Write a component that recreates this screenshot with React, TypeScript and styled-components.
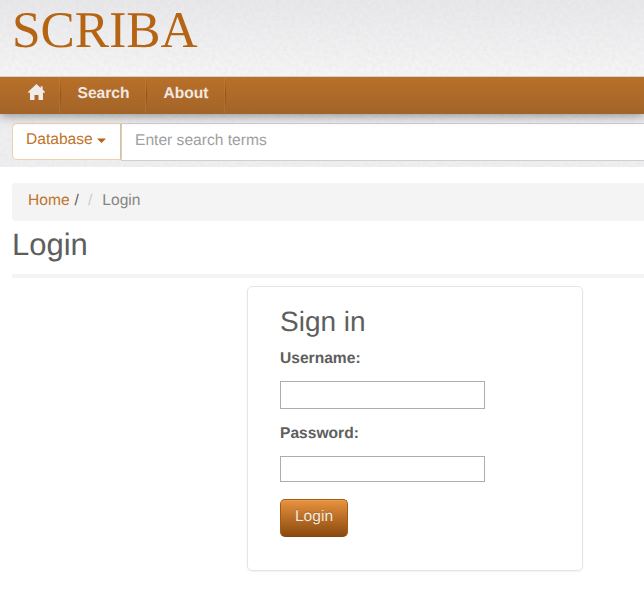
import React from "react";
import styled, { createGlobalStyle } from "styled-components";

const grain = encodeURIComponent(
  `<svg xmlns="http://www.w3.org/2000/svg" width="200" height="200"><filter id="n" x="0" y="0" width="100%" height="100%" color-interpolation-filters="sRGB"><feTurbulence type="fractalNoise" baseFrequency="0.25" numOctaves="2" stitchTiles="stitch"/><feColorMatrix values="0 0 0 0 0.5  0 0 0 0 0.5  0 0 0 0 0.53  0.1 0 0 0 -0.035"/></filter><rect width="200" height="200" filter="url(#n)"/></svg>`
);

const GlobalStyle = createGlobalStyle`
  *, *::before, *::after { box-sizing: border-box; }
  body {
    margin: 0;
    overflow: hidden;
    background: #fff;
    color: #5e5e5e;
    font: 15.6px/20px "Liberation Sans", Arial, sans-serif;
    text-rendering: geometricPrecision;
  }
`;

const Page = styled.div`
  height: 611px;
  overflow: hidden;
`;

const Header = styled.header`
  position: relative;
  z-index: 2;
  height: 77px;
  padding: 1px 12px 0;
  border-bottom: 1px solid #d3d2d2;
  background: url("data:image/svg+xml,${grain}"), linear-gradient(#e8e8ea, #f5f5f6);
`;

const Brand = styled.a`
  display: block;
  color: #b56414;
  font: 51.4px/60px "Liberation Serif", "Times New Roman", serif;
`;

const Nav = styled.nav`
  position: relative;
  z-index: 1;
  display: flex;
  height: 37px;
  padding-left: 12px;
  border-bottom: 1px solid #a0642b;
  background: linear-gradient(#b97029, #a36428);
  box-shadow: 0 2px 10px rgba(0, 0, 0, 0.4);
`;

const NavItem = styled.a<{ $width: number }>`
  display: flex;
  justify-content: center;
  width: ${(p) => p.$width}px;
  padding-top: 7px;
  color: #f0e8e2;
  font-weight: bold;
  border-right: 1px solid;
  border-image: linear-gradient(transparent 8%, #9d4b1c 50%, transparent 88%) 1;
  box-shadow: inset -1px 0 rgba(255, 220, 180, 0.08);
`;

const SearchBar = styled.div`
  display: flex;
  height: 53px;
  padding: 9px 0 0 12px;
  background: url("data:image/svg+xml,${grain}"), #efeff1;
`;

const DatabaseButton = styled.button`
  display: flex;
  align-items: center;
  gap: 4px;
  width: 109px;
  height: 37px;
  padding: 0 0 3px 13px;
  border: 1px solid #f0d0ad;
  border-right-color: #e5bd91;
  border-radius: 5px 0 0 5px;
  background: #fff;
  color: #bf7429;
  font: inherit;
  text-rendering: inherit;
`;

const Caret = styled.svg`
  width: 9px;
  height: 5px;
  margin-top: 1px;
  fill: #b56414;
`;

const SearchInput = styled.input`
  flex: 1;
  min-width: 0;
  height: 38px;
  padding: 0 13px 2px;
  border: 1px solid #cfcfcf;
  border-width: 1px 0 1px 1px;
  border-radius: 0;
  background: #fff;
  font: inherit;
  text-rendering: inherit;

  &::placeholder { color: #a0a0a0; opacity: 1; }
`;

const Content = styled.main`
  padding: 16px 0 0 12px;
`;

const Breadcrumb = styled.div`
  display: flex;
  height: 38px;
  padding: 8px 16px;
  border-radius: 4px 0 0 4px;
  background: #f4f4f4;
`;

const Crumb = styled.span<{ $tone: string; $gap: number }>`
  margin-right: ${(p) => p.$gap}px;
  color: ${(p) => p.$tone};
`;

const PageTitle = styled.h1`
  height: 57px;
  margin: 0 0 8px;
  padding-top: 4px;
  border-bottom: 4px solid #f4f4f4;
  font-size: 31px;
  font-weight: normal;
  line-height: 40px;
`;

const Panel = styled.form`
  width: 336px;
  height: 285px;
  margin-left: 235px;
  padding: 15px 32px;
  border: 1px solid #e4e4e4;
  border-radius: 5px;
  box-shadow: 0 1px 2px rgba(0, 0, 0, 0.06);
`;

const PanelTitle = styled.h2`
  margin: 0 0 7px;
  font-size: 28px;
  font-weight: normal;
  line-height: 40px;
`;

const Label = styled.label`
  display: block;
  font-weight: bold;
`;

const Field = styled.input<{ $height: number; $gap: number }>`
  display: block;
  width: 205px;
  height: ${(p) => p.$height}px;
  margin: 12px 0 ${(p) => p.$gap}px;
  padding: 2px 6px;
  border: 1px solid #adadad;
  border-radius: 0;
  background: #fff;
  font: inherit;
`;

const LoginButton = styled.button`
  display: block;
  width: 68px;
  height: 38px;
  padding: 0 0 3px;
  border: 1px solid #a45b16;
  border-bottom-color: #85450c;
  border-radius: 5px;
  background: linear-gradient(#e8923e, #8a4a0e);
  box-shadow: inset 0 1px rgba(255, 255, 255, 0.12);
  color: #f4e9df;
  font: inherit;
  text-rendering: inherit;
  text-shadow: 0 -1px rgba(0, 0, 0, 0.25);
`;

const HomeIcon = () => (
  <svg width="17" height="17" viewBox="0 0 17 17" fill="#f0ece9" aria-label="Home">
    <path d="M8.5 0 .2 7.7v1H2V16h4.5v-5h4v5H15V8.7h1.8v-1L14.6 5.6V2.2h-1.9v1.7z" />
  </svg>
);

export default function App() {
  return (
    <Page>
      <GlobalStyle />
      <Header>
        <Brand>SCRIBA</Brand>
      </Header>
      <Nav>
        <NavItem $width={49}><HomeIcon /></NavItem>
        <NavItem $width={86}>Search</NavItem>
        <NavItem $width={79}>About</NavItem>
      </Nav>
      <SearchBar>
        <DatabaseButton>
          Database
          <Caret viewBox="0 0 9 5"><path d="M0 .5h9L4.5 5z" /></Caret>
        </DatabaseButton>
        <SearchInput placeholder="Enter search terms" />
      </SearchBar>
      <Content>
        <Breadcrumb>
          <Crumb $tone="#bf7429" $gap={5}>Home</Crumb>
          <Crumb $tone="#5e5e5e" $gap={9}>/</Crumb>
          <Crumb $tone="#cccccc" $gap={10}>/</Crumb>
          <Crumb $tone="#858585" $gap={0}>Login</Crumb>
        </Breadcrumb>
        <PageTitle>Login</PageTitle>
        <Panel onSubmit={(e) => e.preventDefault()}>
          <PanelTitle>Sign in</PanelTitle>
          <Label htmlFor="username">Username:</Label>
          <Field id="username" $height={28} $gap={15} />
          <Label htmlFor="password">Password:</Label>
          <Field id="password" type="password" $height={26} $gap={17} />
          <LoginButton>Login</LoginButton>
        </Panel>
      </Content>
    </Page>
  );
}
